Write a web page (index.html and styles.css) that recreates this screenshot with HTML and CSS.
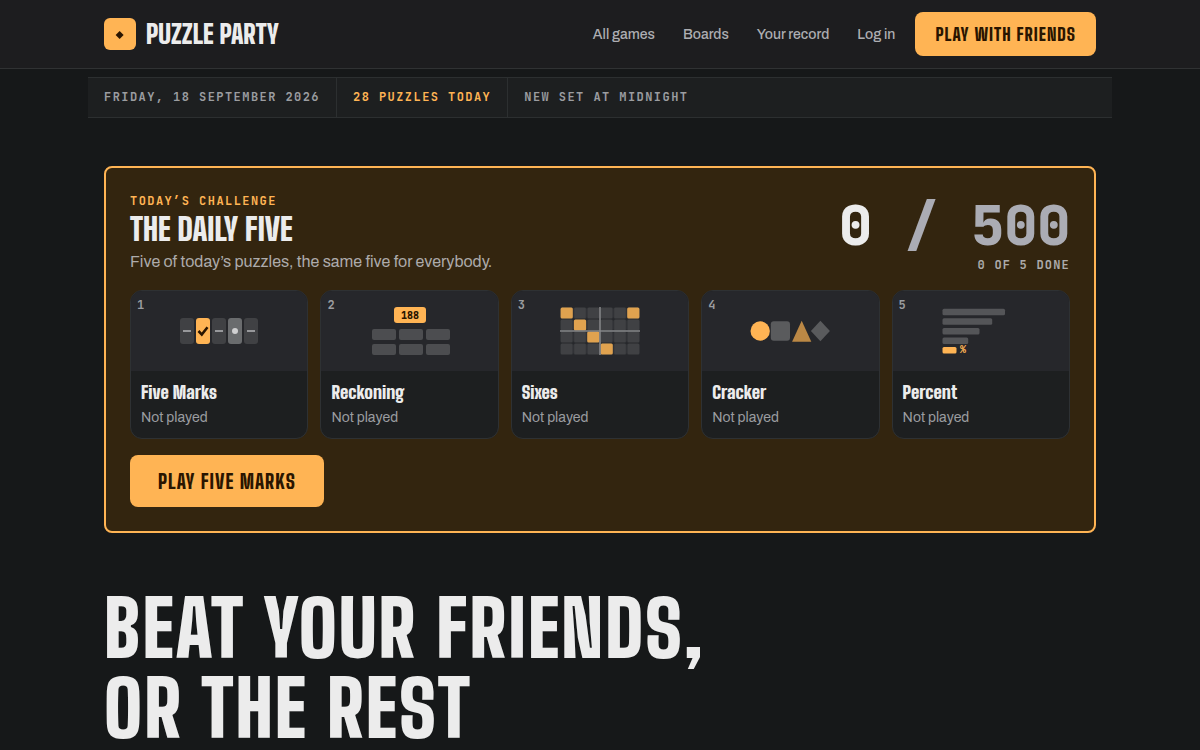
FILE: index.html
```html
<!DOCTYPE html>
<html lang="en">
<head>
    <meta charset="UTF-8">
    <meta name="viewport" content="width=device-width, initial-scale=1.0">
    <title>Puzzle Party</title>
    <link rel="stylesheet" href="styles.css">
</head>
<body>
    <header class="site-header">
        <div class="header-inner">
            <a class="brand" href="#">
                <svg class="brand-mark" viewBox="0 0 32 32" aria-hidden="true">
                    <rect width="32" height="32" rx="6" fill="#ffb454"/>
                    <path d="M15.6 13L19.6 17L15.6 21L11.6 17Z" fill="#2a1500"/>
                </svg>
                <span>Puzzle Party</span>
            </a>
            <nav class="site-nav">
                <a href="#">All games</a>
                <a href="#">Boards</a>
                <a href="#">Your record</a>
                <a href="#">Log in</a>
            </nav>
            <button class="button" type="button">Play with friends</button>
        </div>
    </header>

    <div class="ticker">
        <span>Friday, 18 September 2026</span>
        <span class="ticker-hot">28 puzzles today</span>
        <span>New set at midnight</span>
    </div>

    <main class="page">
        <section class="daily">
            <div class="daily-head">
                <div>
                    <p class="eyebrow">Today’s challenge</p>
                    <h2>The Daily Five</h2>
                    <p class="daily-text">Five of today’s puzzles, the same five for everybody.</p>
                </div>
                <div class="score">
                    <p class="score-total">0 <span>/ 500</span></p>
                    <p class="score-done">0 of 5 done</p>
                </div>
            </div>

            <div class="games">
                <a class="game" href="#">
                    <div class="thumb">
                        <span class="game-number">1</span>
                        <svg viewBox="0 0 80 48" aria-hidden="true">
                            <g fill="#404144">
                                <rect x="1" y="11" width="14" height="26" rx="3"/>
                                <rect x="33" y="11" width="14" height="26" rx="3"/>
                                <rect x="65" y="11" width="14" height="26" rx="3"/>
                            </g>
                            <rect x="17" y="11" width="14" height="26" rx="3" fill="#ffb454"/>
                            <rect x="49" y="11" width="14" height="26" rx="3" fill="#6a6c6e"/>
                            <path d="M4 24H12M36 24H44M68 24H76" stroke="#97989b" stroke-width="2"/>
                            <path d="M19.5 24L22.8 27.6L28.5 20.2" fill="none" stroke="#2a1500" stroke-width="2.6"/>
                            <circle cx="56" cy="24" r="3" fill="#d0d0d1"/>
                        </svg>
                    </div>
                    <div class="game-body">
                        <h3>Five Marks</h3>
                        <p>Not played</p>
                    </div>
                </a>
                <a class="game" href="#">
                    <div class="thumb">
                        <span class="game-number">2</span>
                        <svg viewBox="0 0 80 48" aria-hidden="true">
                            <rect x="24" y="0" width="32" height="16" rx="3" fill="#ffb454"/>
                            <text class="thumb-text" x="40" y="12" text-anchor="middle" fill="#2a1500">188</text>
                            <g fill="#4c4d50">
                                <rect x="2" y="22" width="24" height="11" rx="2"/>
                                <rect x="29" y="22" width="24" height="11" rx="2"/>
                                <rect x="56" y="22" width="24" height="11" rx="2"/>
                                <rect x="2" y="37" width="24" height="11" rx="2"/>
                                <rect x="29" y="37" width="24" height="11" rx="2"/>
                                <rect x="56" y="37" width="24" height="11" rx="2"/>
                            </g>
                        </svg>
                    </div>
                    <div class="game-body">
                        <h3>Reckoning</h3>
                        <p>Not played</p>
                    </div>
                </a>
                <a class="game" href="#">
                    <div class="thumb">
                        <span class="game-number">3</span>
                        <svg viewBox="0 0 80 48" aria-hidden="true">
                            <defs>
                                <pattern id="cells" width="13.33" height="12" patternUnits="userSpaceOnUse">
                                    <rect x="0.6" y="0.5" width="12.2" height="11" rx="1.5" fill="#404144"/>
                                </pattern>
                            </defs>
                            <rect width="80" height="48" fill="url(#cells)"/>
                            <g fill="#e0a24f">
                                <rect x="0.6" y="0.5" width="12.2" height="11" rx="1.5"/>
                                <rect x="67.2" y="0.5" width="12.2" height="11" rx="1.5"/>
                                <rect x="13.9" y="12.5" width="12.2" height="11" rx="1.5"/>
                                <rect x="27.2" y="24.5" width="12.2" height="11" rx="1.5"/>
                                <rect x="40.6" y="36.5" width="12.2" height="11" rx="1.5"/>
                            </g>
                            <path d="M40 0V48M0 24H80" stroke="#87888a" stroke-width="1.6"/>
                        </svg>
                    </div>
                    <div class="game-body">
                        <h3>Sixes</h3>
                        <p>Not played</p>
                    </div>
                </a>
                <a class="game" href="#">
                    <div class="thumb">
                        <span class="game-number">4</span>
                        <svg viewBox="0 0 80 48" aria-hidden="true">
                            <circle cx="10.2" cy="24" r="9.7" fill="#ffb454"/>
                            <rect x="20.8" y="14.3" width="19.2" height="19.4" rx="3" fill="#5a5b5d"/>
                            <path d="M51.7 13.7L61.3 34.7H42.1Z" fill="#bb8845"/>
                            <path d="M70.4 13.7L79.9 24L70.4 34.3L60.9 24Z" fill="#5a5b5d"/>
                        </svg>
                    </div>
                    <div class="game-body">
                        <h3>Cracker</h3>
                        <p>Not played</p>
                    </div>
                </a>
                <a class="game" href="#">
                    <div class="thumb">
                        <span class="game-number">5</span>
                        <svg viewBox="0 0 80 48" aria-hidden="true">
                            <g fill="#545558">
                                <rect x="1.5" y="1.7" width="62.5" height="6.5" rx="1.5"/>
                                <rect x="1.5" y="11.3" width="49.7" height="6.5" rx="1.5"/>
                                <rect x="1.5" y="20.9" width="37" height="6.5" rx="1.5"/>
                                <rect x="1.5" y="30.5" width="25.7" height="6.5" rx="1.5"/>
                            </g>
                            <rect x="1.5" y="40" width="14" height="6.5" rx="1.5" fill="#ffb454"/>
                            <text class="thumb-text" x="19" y="46" fill="#ffb454">%</text>
                        </svg>
                    </div>
                    <div class="game-body">
                        <h3>Percent</h3>
                        <p>Not played</p>
                    </div>
                </a>
            </div>

            <button class="button button-large" type="button">Play Five Marks</button>
        </section>

        <h1>Beat your friends,<br>or the rest</h1>
    </main>
</body>
</html>
```
FILE: styles.css
```css
/* General Styles */
* {
    box-sizing: border-box;
}

body {
    margin: 0;
    background: #161819;
    color: #ececec;
    font-family: 'Archivo', 'Liberation Sans', sans-serif;
    font-size: 16px;
}

h1, h2, h3, p {
    margin: 0;
}

a {
    color: inherit;
    text-decoration: none;
}

h1, h2, h3, .brand, .button {
    font-family: 'Big Shoulders', 'Roboto Condensed', 'Liberation Sans', sans-serif;
    font-weight: 900;
}

/* Header */
.site-header {
    background: #1d1d1f;
    border-bottom: 1px solid #303233;
}

.header-inner {
    display: flex;
    align-items: center;
    max-width: 1024px;
    height: 68px;
    margin: 0 auto;
    padding: 0 16px;
}

.brand {
    display: flex;
    align-items: center;
    gap: 10px;
    margin-right: auto;
    font-size: 26px;
    text-transform: uppercase;
}

.brand-mark {
    width: 32px;
    height: 32px;
}

.site-nav {
    display: flex;
    gap: 28px;
    margin-right: 20px;
    color: #adaeb2;
    font-size: 14px;
    font-weight: 500;
}

.button {
    height: 44px;
    padding: 0 20px;
    border: none;
    border-radius: 8px;
    background: #ffb454;
    color: #2a1500;
    font-size: 18px;
    font-weight: 800;
    letter-spacing: 1px;
    text-transform: uppercase;
    cursor: pointer;
}

.button-large {
    height: 52px;
    padding: 0 28px;
    font-size: 20px;
}

/* Ticker */
.ticker {
    display: flex;
    max-width: 1024px;
    margin: 8px auto 0;
    border: 1px solid #2c2f30;
    border-width: 1px 0;
    background: #1d1f20;
    color: #9b9da0;
}

.ticker span {
    padding: 0 16px;
    border-right: 1px solid #2c2f30;
    line-height: 39px;
}

.ticker span:last-child {
    border-right: none;
}

.ticker .ticker-hot {
    color: #ffb454;
}

.ticker, .eyebrow, .score-done {
    font-family: 'JetBrains Mono', 'Liberation Mono', monospace;
    font-size: 12px;
    font-weight: bold;
    letter-spacing: 0.12em;
    text-transform: uppercase;
}

/* Daily challenge */
.page {
    max-width: 1024px;
    margin: 0 auto;
    padding: 48px 16px;
}

.daily {
    padding: 24px;
    border: 2px solid #ffb454;
    border-radius: 8px;
    background: #33250f;
}

.daily-head {
    display: flex;
    justify-content: space-between;
    height: 98px;
}

.eyebrow {
    color: #ffb454;
    line-height: 18px;
}

.daily h2 {
    font-size: 31px;
    line-height: 38px;
    text-transform: uppercase;
}

.daily-text {
    color: #adabab;
    line-height: 28px;
}

.score {
    text-align: right;
}

.score-total {
    font-family: 'JetBrains Mono', 'Liberation Mono', monospace;
    font-size: 56px;
    font-weight: 800;
    letter-spacing: -0.01em;
    line-height: 67px;
}

.score-total span {
    color: #abacb4;
}

.score-done {
    color: #adabab;
    letter-spacing: 0.1em;
    line-height: 12px;
}

/* Game cards */
.games {
    display: grid;
    grid-template-columns: repeat(5, 1fr);
    gap: 12px;
    margin-bottom: 16px;
}

.game {
    border: 1px solid #2e3133;
    border-radius: 12px;
    background: #1d1f20;
    overflow: hidden;
}

.thumb {
    display: flex;
    align-items: center;
    justify-content: center;
    position: relative;
    height: 80px;
    background: #26272b;
}

.thumb svg {
    width: 80px;
    height: 48px;
}

.thumb-text {
    font-family: 'JetBrains Mono', 'Liberation Mono', monospace;
    font-size: 10px;
    font-weight: 800;
}

.game-number {
    position: absolute;
    top: 6px;
    left: 6px;
    color: #9b9da0;
    font-family: 'JetBrains Mono', 'Liberation Mono', monospace;
    font-size: 12px;
    font-weight: bold;
}

.game-body {
    padding: 8px 10px;
}

.game h3 {
    font-size: 18px;
    line-height: 26px;
}

.game p {
    color: #9b9da0;
    font-size: 14px;
    line-height: 25px;
}

/* Intro */
h1 {
    margin-top: 56px;
    font-size: 77px;
    letter-spacing: 2px;
    line-height: 80px;
    text-transform: uppercase;
}
```
